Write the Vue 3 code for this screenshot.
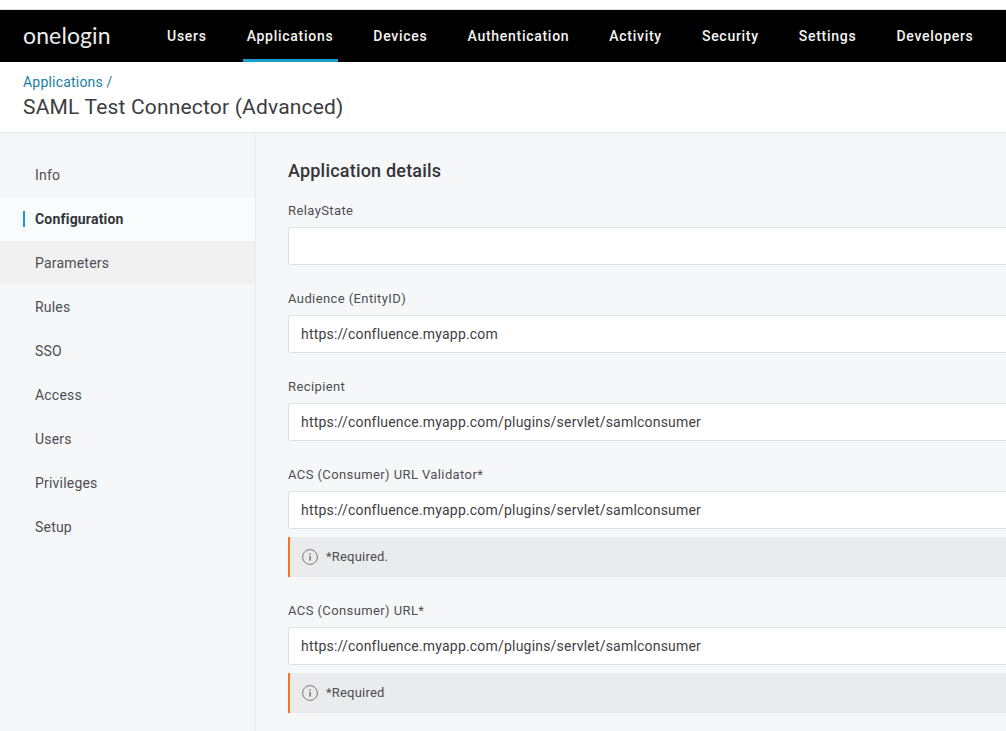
<script setup>
const navItems = ['Users', 'Applications', 'Devices', 'Authentication', 'Activity', 'Security', 'Settings', 'Developers']
const menuItems = ['Info', 'Configuration', 'Parameters', 'Rules', 'SSO', 'Access', 'Users', 'Privileges', 'Setup']

const fields = [
  { label: 'RelayState', value: '' },
  { label: 'Audience (EntityID)', value: 'https://confluence.myapp.com' },
  { label: 'Recipient', value: 'https://confluence.myapp.com/plugins/servlet/samlconsumer' },
  {
    label: 'ACS (Consumer) URL Validator*',
    value: 'https://confluence.myapp.com/plugins/servlet/samlconsumer',
    note: '*Required.'
  },
  {
    label: 'ACS (Consumer) URL*',
    value: 'https://confluence.myapp.com/plugins/servlet/samlconsumer',
    note: '*Required'
  }
]
</script>

<template>
  <div class="page">
    <header class="topbar">
      <span class="logo">onelogin</span>
      <nav class="nav">
        <a
          v-for="item in navItems"
          :key="item"
          href="#"
          class="nav-item"
          :class="{ active: item === 'Applications' }"
        >{{ item }}</a>
      </nav>
    </header>

    <div class="title-area">
      <a href="#" class="crumb">Applications /</a>
      <h1 class="title">SAML Test Connector (Advanced)</h1>
    </div>

    <div class="body">
      <aside class="sidebar">
        <a
          v-for="item in menuItems"
          :key="item"
          href="#"
          class="menu-item"
          :class="{ active: item === 'Configuration', hovered: item === 'Parameters' }"
        >{{ item }}</a>
      </aside>

      <main class="content">
        <h2 class="section-title">Application details</h2>
        <div v-for="field in fields" :key="field.label" class="field">
          <label class="field-label">{{ field.label }}</label>
          <input class="field-input" type="text" :value="field.value" />
          <div v-if="field.note" class="note">
            <svg class="note-icon" width="16" height="16" viewBox="0 0 16 16" fill="none">
              <circle cx="8" cy="8" r="7.4" stroke="#77797c" stroke-width="1" />
              <rect x="7.4" y="7" width="1.3" height="4.6" fill="#5f6164" />
              <rect x="7.4" y="4.4" width="1.3" height="1.4" fill="#5f6164" />
            </svg>
            <span>{{ field.note }}</span>
          </div>
        </div>
      </main>
    </div>
  </div>
</template>

<style scoped>
.page {
  width: 1006px;
  height: 731px;
  overflow: hidden;
  background-color: #fff;
  font-family: Roboto, "Liberation Sans", sans-serif;
  color: #3f4144;
}

.topbar {
  display: flex;
  align-items: center;
  height: 52px;
  margin-top: 9px;
  border-top: 1px solid #dcdcdc;
  box-sizing: content-box;
  background-color: #000;
  padding-left: 23px;
}

.logo {
  width: 140px;
  flex-shrink: 0;
  font-family: Lato, sans-serif;
  font-size: 23px;
  line-height: 50px;
  height: 52px;
  letter-spacing: 0.12px;
  color: #ececec;
}

.nav {
  display: flex;
  gap: 32px;
  height: 52px;
}

.nav-item {
  display: flex;
  align-items: center;
  padding: 0 4px;
  color: #f4f4f4;
  font-size: 14px;
  font-weight: 500;
  letter-spacing: 0.72px;
  text-decoration: none;
  white-space: nowrap;
}

.nav-item.active {
  padding-right: 5px;
  margin-right: -1px;
  box-shadow: inset 0 -3px 0 #1a9ccb;
}

.title-area {
  height: 71px;
  padding: 11px 23px 0;
  box-sizing: border-box;
  border-bottom: 1px solid #e6e7e9;
}

.crumb {
  display: block;
  font-size: 14px;
  line-height: 18px;
  letter-spacing: 0.2px;
  color: #1a7fa3;
  text-decoration: none;
}

.title {
  margin: 3px 0 0;
  font-size: 21px;
  line-height: 26px;
  font-weight: 400;
  letter-spacing: 0.18px;
  color: #3b3d40;
}

.body {
  display: flex;
  height: 598px;
  background-color: #f6f7f9;
}

.sidebar {
  width: 256px;
  flex-shrink: 0;
  box-sizing: border-box;
  padding-top: 20px;
  border-right: 1px solid #e9eaec;
}

.menu-item {
  display: flex;
  align-items: center;
  height: 44px;
  padding-left: 35px;
  font-size: 14px;
  letter-spacing: 0.2px;
  color: #4c4e51;
  text-decoration: none;
  position: relative;
}

.menu-item.active {
  background-color: #f8fcfd;
  font-weight: 700;
  color: #333538;
}

.menu-item.active::before {
  content: '';
  position: absolute;
  left: 23px;
  top: 14px;
  width: 2px;
  height: 16px;
  background-color: #1a9ccb;
}

.menu-item.hovered {
  background-color: #f1f1f2;
}

.content {
  width: 800px;
  flex-shrink: 0;
  box-sizing: border-box;
  padding: 26px 0 0 32px;
}

.section-title {
  margin: 0 0 19px;
  font-size: 18px;
  line-height: 24px;
  font-weight: 500;
  letter-spacing: 0.2px;
  color: #333538;
}

.field {
  margin-bottom: 25px;
}

.field-label {
  display: block;
  height: 18px;
  margin-bottom: 7px;
  font-size: 13px;
  line-height: 18px;
  letter-spacing: 0.4px;
  color: #4c4e51;
}

.field-input {
  display: block;
  width: 100%;
  height: 38px;
  box-sizing: border-box;
  padding: 0 12px;
  border: 1px solid #dfe0e3;
  border-radius: 2px;
  background-color: #fff;
  font-family: inherit;
  font-size: 14px;
  letter-spacing: 0.2px;
  color: #3f4144;
  outline: none;
}

.note {
  display: flex;
  align-items: center;
  gap: 8px;
  height: 40px;
  margin-top: 8px;
  box-sizing: border-box;
  padding: 0 0 2px 12px;
  border-left: 2px solid #f47521;
  background-color: #e9ebec;
  font-size: 13px;
  letter-spacing: 0.2px;
  color: #4c4e51;
}

.note-icon {
  flex-shrink: 0;
  margin-top: 2px;
}
</style>
